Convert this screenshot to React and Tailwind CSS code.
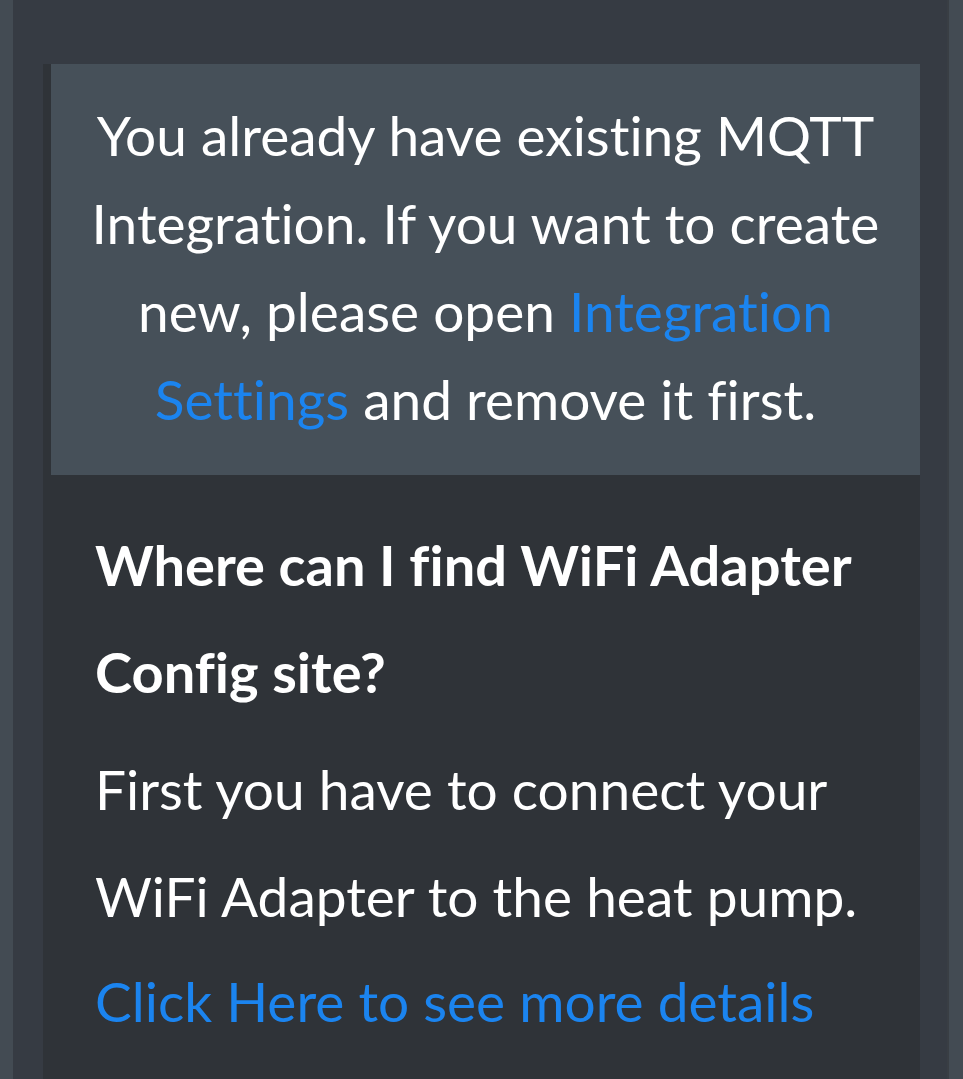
import React from 'react';

const App = () => {
  return (
    <div
      className="flex min-h-[1079px] w-full bg-[#363b43] text-white [font-variant-ligatures:none]"
      style={{ fontFamily: 'Lato, "Open Sans", sans-serif' }}
    >
      <div className="w-[13px] shrink-0 bg-[#434b53]" />
      <div className="flex-1 pt-[64px] pl-[30px] pr-[27px]">
        <div className="bg-[#2f3338] min-h-[1015px]">
          <div className="ml-[8px] h-[411px] bg-[#465059] px-[20px] pt-[27px] text-center text-[55px] leading-[88px]">
            You already have existing MQTT Integration. If you want to create new, please open{' '}
            <a href="#" className="text-[#1b84ef]">Integration Settings</a> and remove it first.
          </div>
          <div className="pl-[52px] pr-[30px] pt-[36px]">
            <h2 className="text-[56px] font-bold leading-[107px]">
              Where can I find WiFi Adapter Config site?
            </h2>
            <p className="mt-[11px] text-[55px] leading-[107px]">
              First you have to connect your WiFi Adapter to the heat pump.
            </p>
            <a href="#" className="block -mt-[2px] text-[55px] leading-[107px] text-[#1b84ef]">
              Click Here to see more details
            </a>
          </div>
        </div>
      </div>
      <div className="w-[2px] shrink-0 bg-[#393e44]" />
      <div className="w-[14px] shrink-0 bg-[#434b53]" />
    </div>
  );
};

export default App;
